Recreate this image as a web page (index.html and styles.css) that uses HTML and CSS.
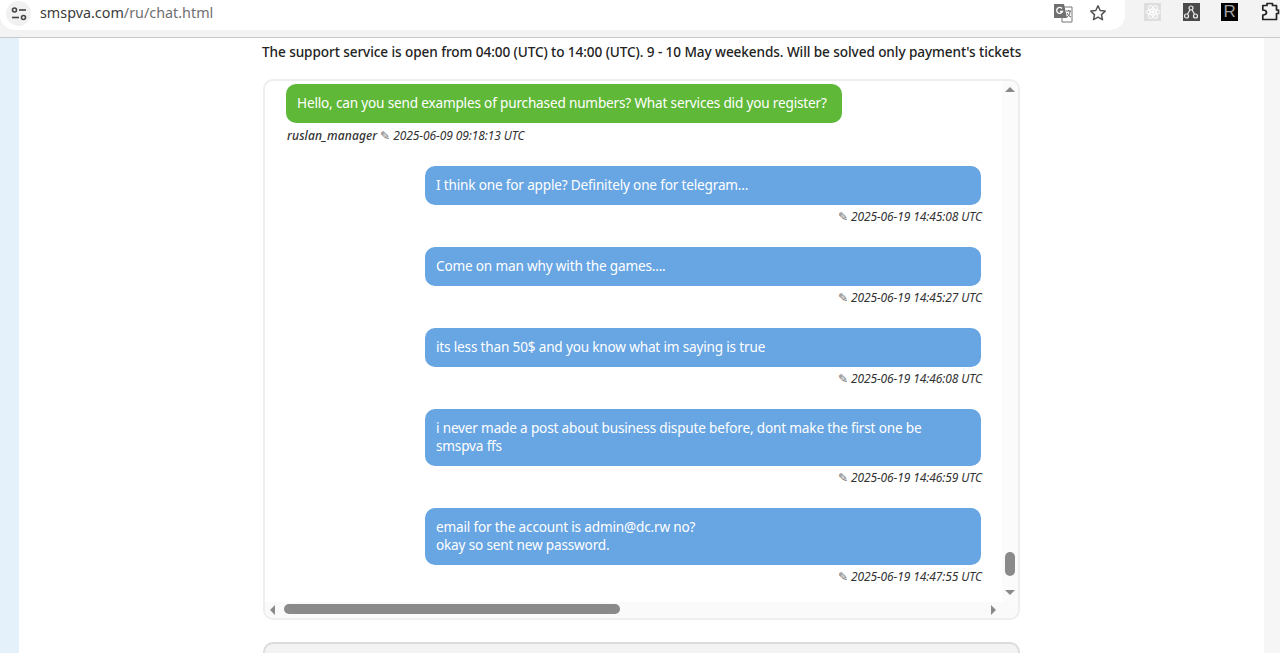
FILE: index.html
```html
<!DOCTYPE html>
<html lang="en">
  <head>
    <meta charset="UTF-8" />
    <title>Support chat</title>
    <link rel="stylesheet" href="styles.css">
  </head>
  <body>
    <div class="browser-bar">
      <div class="omnibox">
        <span class="site-btn">
          <svg width="16" height="14" viewBox="0 0 16 14" fill="none" stroke="#444" stroke-width="1.6">
            <circle cx="3.5" cy="3" r="2"/><path d="M8 3h7"/><path d="M1 10.500h7"/><circle cx="12.500" cy="10.500" r="2"/>
          </svg>
        </span>
        <span class="url">smspva.com<span class="url-path">/ru/chat.html</span></span>
        <span class="omni-icons">
          <svg width="20" height="20" viewBox="0 0 20 20">
            <path d="M9 4h10v15H9z" fill="#fff" stroke="#777" stroke-width="1"/>
            <path d="M1 1h10l3 14H1z" fill="#6f6f6f"/>
            <path d="M13 8h5M15.500 7v1M14 14c2-1 3-3 3-6M14 10c1 2 2 3 4 4" fill="none" stroke="#666" stroke-width="1"/>
            <path d="M9 5.500a3 3 0 1 0 .5 3H7" fill="none" stroke="#fff" stroke-width="1.300"/>
          </svg>
          <svg width="18" height="18" viewBox="0 0 18 18" fill="none" stroke="#555" stroke-width="1.500" stroke-linejoin="round">
            <path d="M9 1.800l2.200 4.700 5 .6-3.700 3.500 1 5.100L9 13.200l-4.500 2.500 1-5.100L1.800 7.100l5-.6z"/>
          </svg>
        </span>
      </div>
      <div class="extensions">
        <span class="ext ext-react">
          <svg width="16" height="16" viewBox="0 0 16 16" fill="none" stroke="#fff" stroke-width="1">
            <ellipse cx="8" cy="8" rx="7" ry="2.800"/>
            <ellipse cx="8" cy="8" rx="7" ry="2.800" transform="rotate(60 8 8)"/>
            <ellipse cx="8" cy="8" rx="7" ry="2.800" transform="rotate(120 8 8)"/>
            <circle cx="8" cy="8" r="1.300" fill="#fff"/>
          </svg>
        </span>
        <span class="ext ext-graph">
          <svg width="16" height="16" viewBox="0 0 16 16" fill="none" stroke="#eee" stroke-width="1.200">
            <circle cx="8" cy="4" r="2"/><circle cx="3.500" cy="12" r="2"/><circle cx="12.500" cy="12" r="2"/>
            <path d="M7 5.800l-2.500 4.500M9 5.800l2.500 4.500"/>
          </svg>
        </span>
        <span class="ext ext-r">R</span>
        <svg class="puzzle" width="20" height="20" viewBox="0 0 20 20" fill="none" stroke="#222" stroke-width="1.700" stroke-linejoin="round">
          <path d="M1.800 3.500H6V1.500h5.500v2h4V8h2v3.500h-2v6H1.800V13q3.700 0 3.700-2.500T1.800 8z"/>
        </svg>
      </div>
    </div>

    <div class="page">
      <main class="content">
        <p class="notice">The support service is open from 04:00 (UTC) to 14:00 (UTC). 9 - 10 May weekends. Will be solved only payment's tickets</p>

        <div class="chat">
          <div class="msg theirs">
            <div class="bubble green">Hello, can you send examples of purchased numbers? What services did you register?</div>
            <div class="meta"><b>ruslan_manager</b> <span class="pen">✎</span> 2025-06-09 09:18:13 UTC</div>
          </div>
          <div class="msg mine">
            <div class="bubble blue">I think one for apple? Definitely one for telegram...</div>
            <div class="meta"><span class="pen">✎</span> 2025-06-19 14:45:08 UTC</div>
          </div>
          <div class="msg mine">
            <div class="bubble blue">Come on man why with the games....</div>
            <div class="meta"><span class="pen">✎</span> 2025-06-19 14:45:27 UTC</div>
          </div>
          <div class="msg mine">
            <div class="bubble blue">its less than 50$ and you know what im saying is true</div>
            <div class="meta"><span class="pen">✎</span> 2025-06-19 14:46:08 UTC</div>
          </div>
          <div class="msg mine">
            <div class="bubble blue">i never made a post about business dispute before, dont make the first one be smspva ffs</div>
            <div class="meta"><span class="pen">✎</span> 2025-06-19 14:46:59 UTC</div>
          </div>
          <div class="msg mine">
            <div class="bubble blue">email for the account is admin@dc.rw no?<br>okay so sent new password.</div>
            <div class="meta"><span class="pen">✎</span> 2025-06-19 14:47:55 UTC</div>
          </div>

          <!-- scrollbars -->
          <div class="vbar">
            <span class="arrow up"></span>
            <span class="vthumb"></span>
            <span class="arrow down"></span>
          </div>
          <div class="hbar">
            <span class="arrow left"></span>
            <span class="hthumb"></span>
            <span class="arrow right"></span>
          </div>
        </div>

        <div class="reply-box"></div>
      </main>
    </div>
  </body>
</html>
```

FILE: styles.css
```css
html,
body {
  margin: 0;
  padding: 0;
  width: 100%;
  height: 100%;
  overflow: hidden;
}

body {
  font-family: "Noto Sans", "Open Sans", sans-serif;
  font-size: 13.600px;
  letter-spacing: -0.18px;
  color: #222;
  background: #fff;
  display: flex;
  flex-direction: column;
}

/* Browser chrome */
.browser-bar {
  flex: none;
  height: 37px;
  display: flex;
  background: #f3f3f3;
  border-bottom: 1px solid #c9c9c9;
}

.omnibox {
  width: 1125px;
  height: 30px;
  display: flex;
  align-items: center;
  background: #fff;
  border-radius: 0 0 15px 15px;
}

.site-btn {
  width: 25px;
  height: 25px;
  margin: -3px 0 0 6px;
  display: flex;
  align-items: center;
  justify-content: center;
  background: #f1f1f1;
  border-radius: 50%;
}

.url {
  margin: -6px 0 0 9px;
  font-size: 14.350px;
  letter-spacing: 0;
  color: #3c3c3c;
}

.url-path {
  color: #6f6f6f;
}

.omni-icons {
  margin: -5px 18px 0 auto;
  display: flex;
  align-items: center;
  gap: 16px;
}

.extensions {
  flex: 1;
  display: flex;
  align-items: flex-start;
  gap: 21.600px;
  padding: 3px 0 0 19px;
  min-width: 0;
  overflow: hidden;
}

.ext {
  flex: none;
  width: 17px;
  height: 18px;
  display: flex;
  align-items: center;
  justify-content: center;
}

.ext-react {
  background: #dedede;
}

.ext-graph {
  background: #4a4a4a;
}

.ext-r {
  background: #000;
  color: #a0a0a0;
  font-size: 17px;
  font-family: "Liberation Sans", sans-serif;
  letter-spacing: 0;
}

.puzzle {
  flex: none;
  margin: -1px 0 0 1px;
}

/* Page */
.page {
  flex: 1;
  display: flex;
  padding: 0 16px 0 19px;
  background: linear-gradient(to right, #e4f1fb 19px, #f6f6f6 19px);
  min-height: 0;
  overflow: hidden;
}

.content {
  flex: 1;
  min-width: 0;
  background: #fff;
  padding: 0 244px;
}

.notice {
  margin: 4px -5px 0 -1px;
  height: 19px;
  line-height: 19px;
  font-weight: 500;
  letter-spacing: -0.09px;
  white-space: nowrap;
  color: #222;
}

.chat {
  position: relative;
  margin-top: 18px;
  height: 534px;
  padding: 3px 0 0 21px;
  border: 2px solid #eeeeee;
  border-radius: 10px;
  overflow: hidden;
}

.msg {
  margin-bottom: 22px;
}

.msg.theirs {
  margin-bottom: 23px;
}

.msg.mine {
  padding-left: 139px;
}

.bubble {
  width: 534px;
  padding: 9.500px 11px 11.500px;
  line-height: 18px;
  color: #fff;
  border-radius: 10px;
}

.green {
  background: #5fb838;
}

.blue {
  background: #67a5e3;
}

.meta {
  margin-top: 3px;
  height: 17px;
  line-height: 18px;
  font-size: 12px;
  letter-spacing: -0.1px;
  font-style: italic;
  color: #333;
}

.theirs .meta {
  margin-top: 4px;
  height: 16px;
  padding-left: 1px;
}

.mine .meta {
  width: 557px;
  text-align: right;
}

.meta b {
  font-weight: 500;
  letter-spacing: 0.12px;
}

.pen {
  font-style: normal;
  color: #666;
}

.vbar {
  position: absolute;
  top: 0;
  right: 0;
  bottom: 16px;
  width: 16px;
  background: #fbfbfb;
}

.hbar {
  position: absolute;
  left: 0;
  right: 0;
  bottom: 0;
  height: 16px;
  background: #fafafa;
}

.arrow {
  position: absolute;
  width: 0;
  height: 0;
  border: 5px solid transparent;
}

.arrow.up {
  top: 6px;
  left: 3px;
  border-top: 0;
  border-bottom-color: #8a8a8a;
}

.arrow.down {
  top: 509px;
  left: 3px;
  border-bottom: 0;
  border-top-color: #8a8a8a;
}

.arrow.left {
  top: 3px;
  left: 5px;
  border-left: 0;
  border-right-color: #8a8a8a;
}

.arrow.right {
  top: 3px;
  left: 726px;
  border-right: 0;
  border-left-color: #8a8a8a;
}

.vthumb {
  position: absolute;
  top: 471px;
  left: 3px;
  width: 10px;
  height: 24px;
  background: #8a8a8a;
  border-radius: 5px;
}

.hthumb {
  position: absolute;
  top: 2px;
  left: 19px;
  width: 336px;
  height: 10px;
  background: #8a8a8a;
  border-radius: 5px;
}

.reply-box {
  margin-top: 22px;
  height: 60px;
  background: #f3f3f3;
  border: 2px solid #dcdcdc;
  border-radius: 10px;
}
```
